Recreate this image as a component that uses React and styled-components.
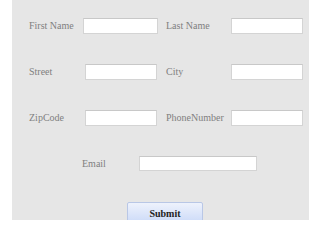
import { createGlobalStyle, styled } from "styled-components";

const Global = createGlobalStyle`
  html, body {
    margin: 0;
    padding: 0;
    background: #ffffff;
  }
  body {
    font-family: "Liberation Serif", "Times New Roman", serif;
  }
`;

const Page = styled.div`
  padding-left: 12px;
  width: 330px;
  height: 220px;
  overflow: hidden;
  box-sizing: border-box;
`;

const Panel = styled.form`
  width: 297px;
  height: 240px;
  background: #e6e6e6;
  box-sizing: border-box;
  padding: 18px 0 0 17px;
  display: flex;
  flex-direction: column;
  gap: 30px;
`;

const Row = styled.div`
  display: grid;
  grid-template-columns: 55px 82px 65px 72px;
  align-items: center;
  height: 16px;
`;

const EmailRow = styled.div`
  display: grid;
  grid-template-columns: 57px 118px;
  align-items: center;
  height: 15px;
  margin-left: 53px;
`;

const Label = styled.label`
  font-size: 10px;
  color: #808080;
  white-space: nowrap;
  line-height: 12px;
`;

const Field = styled.input`
  box-sizing: border-box;
  width: ${(p) => p.$w || 72}px;
  height: ${(p) => p.$h || 16}px;
  margin: 0;
  margin-left: ${(p) => p.$shift || 0}px;
  padding: 0 2px;
  border: 1px solid #d4d4d4;
  border-top-color: #c8c8c8;
  background: #ffffff;
  font-size: 10px;
  outline: none;
`;

const Actions = styled.div`
  margin-top: 1px;
  margin-left: 98px;
`;

const SubmitButton = styled.button`
  width: 76px;
  height: 21px;
  border: 1px solid #b9c7e6;
  border-radius: 2px;
  background: linear-gradient(#eef2fc, #cddbf8);
  font-family: "Liberation Serif", "Times New Roman", serif;
  font-weight: bold;
  font-size: 10px;
  color: #222;
  padding: 0;
  padding-top: 1px;
`;

export default function App() {
  return (
    <Page>
      <Global />
      <Panel onSubmit={(e) => e.preventDefault()}>
        <Row>
          <Label>First Name</Label>
          <Field $w={75} $shift={-1} />
          <Label>Last Name</Label>
          <Field />
        </Row>
        <Row>
          <Label>Street</Label>
          <Field $shift={1} />
          <Label>City</Label>
          <Field />
        </Row>
        <Row>
          <Label>ZipCode</Label>
          <Field $shift={1} />
          <Label>PhoneNumber</Label>
          <Field />
        </Row>
        <EmailRow>
          <Label>Email</Label>
          <Field $w={118} $h={15} />
        </EmailRow>
        <Actions>
          <SubmitButton>Submit</SubmitButton>
        </Actions>
      </Panel>
    </Page>
  );
}
